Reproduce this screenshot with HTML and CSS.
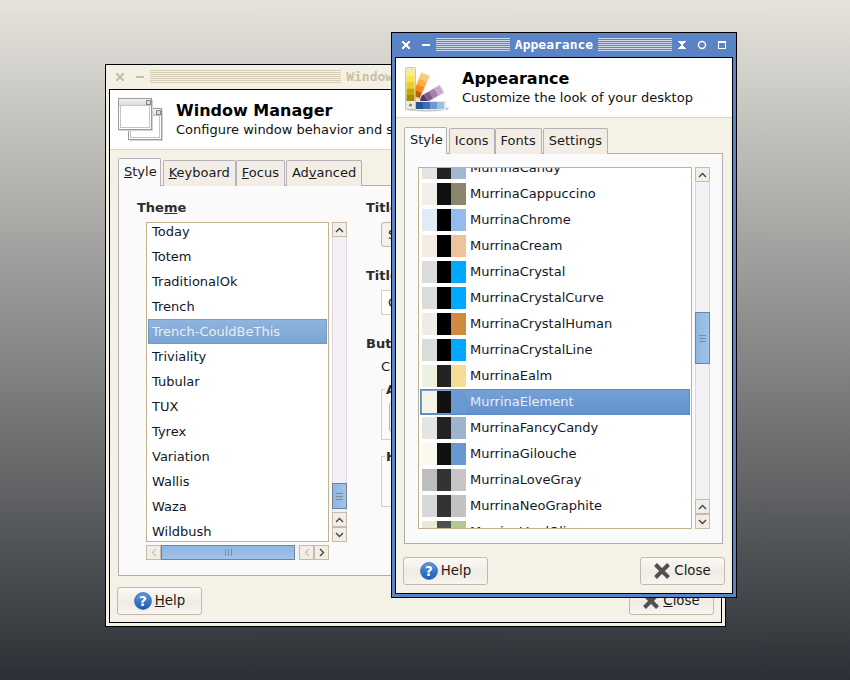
FILE: index.html
```html
<!DOCTYPE html>
<html lang="en">
<head>
  <meta charset="UTF-8">
  <title>Desktop settings</title>
  <link rel="stylesheet" href="styles.css">
</head>
<body>
  <svg class="defs" width="0" height="0">
    <symbol id="up" viewBox="0 0 9 6"><path d="M1 5 L4.5 1.5 L8 5" fill="none" stroke="#444" stroke-width="1.4"/></symbol>
    <symbol id="down" viewBox="0 0 9 6"><path d="M1 1 L4.5 4.5 L8 1" fill="none" stroke="#444" stroke-width="1.4"/></symbol>
    <symbol id="left" viewBox="0 0 6 9"><path d="M5 1 L1.5 4.5 L5 8" fill="none" stroke="currentColor" stroke-width="1.4"/></symbol>
    <symbol id="right" viewBox="0 0 6 9"><path d="M1 1 L4.5 4.5 L1 8" fill="none" stroke="currentColor" stroke-width="1.4"/></symbol>
    <symbol id="help" viewBox="0 0 18 18">
      <defs><linearGradient id="helpfill" x1="0" y1="0" x2="0" y2="1"><stop offset="0" stop-color="#5a9be0"/><stop offset="1" stop-color="#1a5cb0"/></linearGradient></defs>
      <circle cx="9" cy="9" r="8.5" fill="url(#helpfill)" stroke="#1d5aa5" stroke-width="0.6"/>
      <text x="9" y="14" text-anchor="middle" font-family="DejaVu Sans" font-weight="bold" font-size="13.5" fill="#fff">?</text>
    </symbol>
    <symbol id="cross" viewBox="0 0 16 16"><path d="M1.5 1.5 L14.5 14.5 M14.5 1.5 L1.5 14.5" stroke="#505050" stroke-width="4"/></symbol>
    <symbol id="wm-close" viewBox="0 0 10 10" shape-rendering="crispEdges"><path d="M1 1h2v1h1v1h2v-1h1v-1h2v2h-1v1h-1v2h1v1h1v2h-2v-1h-1v-1h-2v1h-1v1h-2v-2h1v-1h1v-2h-1v-1h-1z" fill="currentColor"/></symbol>
    <symbol id="wm-min" viewBox="0 0 10 10" shape-rendering="crispEdges"><rect x="1" y="4" width="8" height="2" fill="currentColor"/></symbol>
    <symbol id="wm-shade" viewBox="0 0 10 10" shape-rendering="crispEdges"><path d="M1 1h8v1h-1v1h-1v1h-1v2h1v1h1v1h1v1h-8v-1h1v-1h1v-1h1v-2h-1v-1h-1v-1h-1z" fill="currentColor"/></symbol>
    <symbol id="wm-stick" viewBox="0 0 10 10"><circle cx="5" cy="5" r="3.5" fill="none" stroke="currentColor" stroke-width="1.4"/></symbol>
    <symbol id="wm-max" viewBox="0 0 10 10" shape-rendering="crispEdges"><path d="M1 1h8v8h-8z M2 3v5h6v-5z" fill="currentColor" fill-rule="evenodd"/></symbol>
  </svg>

  <!-- back window -->
  <div class="window wm">
    <div class="titlebar">
      <div class="tb-btns">
        <svg class="tb-btn"><use href="#wm-close"/></svg>
        <svg class="tb-btn"><use href="#wm-min"/></svg>
      </div>
      <span class="stripes"></span>
      <span class="tb-title">Window Manager</span>
      <span class="stripes"></span>
      <div class="tb-btns">
        <svg class="tb-btn"><use href="#wm-shade"/></svg>
        <svg class="tb-btn"><use href="#wm-stick"/></svg>
        <svg class="tb-btn"><use href="#wm-max"/></svg>
      </div>
    </div>
    <div class="client">
      <div class="header">
        <svg class="header-icon" width="46" height="44" viewBox="0 0 46 44">
          <defs><linearGradient id="wintitle" x1="0" y1="0" x2="0" y2="1"><stop offset="0" stop-color="#f2f2f0"/><stop offset="1" stop-color="#d6d8d2"/></linearGradient></defs>
          <rect x="11" y="12" width="34" height="31" fill="#d4d4d0"/>
          <rect x="10.5" y="10.5" width="33" height="31" fill="#fff" stroke="#9a9a96"/>
          <rect x="11" y="11" width="32" height="7" fill="url(#wintitle)"/>
          <rect x="12.5" y="17.5" width="29" height="22" fill="#fff" stroke="#c4c4c0"/>
          <rect x="38.5" y="12.5" width="4" height="4" fill="#ddd" stroke="#888"/>
          <rect x="1" y="2" width="34" height="31" fill="#d4d4d0"/>
          <rect x="0.5" y="0.5" width="33" height="31" fill="#fff" stroke="#9a9a96"/>
          <rect x="1" y="1" width="32" height="7" fill="url(#wintitle)"/>
          <rect x="2.5" y="7.5" width="29" height="22" fill="#fff" stroke="#c4c4c0"/>
          <rect x="28.5" y="2.5" width="4" height="4" fill="#ddd" stroke="#888"/>
        </svg>
        <div class="header-text">
          <div class="header-title">Window Manager</div>
          <div class="header-sub">Configure window behavior and shortcuts</div>
        </div>
      </div>
      <div class="notebook wm-notebook">
        <div class="tabs">
          <div class="tab active"><u>S</u>tyle</div>
          <div class="tab"><u>K</u>eyboard</div>
          <div class="tab"><u>F</u>ocus</div>
          <div class="tab">Ad<u>v</u>anced</div>
        </div>
        <div class="pane wm-pane">
          <div class="theme-col">
            <div class="section-label">The<u>m</u>e</div>
            <div class="list-row">
              <div class="list theme-list">
                <div class="rows theme-rows">
                  <div class="row">Today</div>
                  <div class="row">Totem</div>
                  <div class="row">TraditionalOk</div>
                  <div class="row">Trench</div>
                  <div class="row selected">Trench-CouldBeThis</div>
                  <div class="row">Triviality</div>
                  <div class="row">Tubular</div>
                  <div class="row">TUX</div>
                  <div class="row">Tyrex</div>
                  <div class="row">Variation</div>
                  <div class="row">Wallis</div>
                  <div class="row">Waza</div>
                  <div class="row">Wildbush</div>
                </div>
              </div>
              <div class="vscroll">
                <div class="step"><svg class="chev-v"><use href="#up"/></svg></div>
                <div class="trough theme-trough"><div class="thumb"><span class="grip"></span></div></div>
                <div class="step"><svg class="chev-v"><use href="#up"/></svg></div>
                <div class="step"><svg class="chev-v"><use href="#down"/></svg></div>
              </div>
            </div>
            <div class="hscroll">
              <div class="step-h dim"><svg class="chev-h"><use href="#left"/></svg></div>
              <div class="hthumb"><span class="hgrip"></span></div>
              <div class="hgap"></div>
              <div class="step-h dim"><svg class="chev-h"><use href="#left"/></svg></div>
              <div class="step-h"><svg class="chev-h"><use href="#right"/></svg></div>
            </div>
          </div>
          <div class="options-col">
            <div class="section-label">Title font</div>
            <div class="fake-button">Sans Bold 10</div>
            <div class="section-label opt-gap">Title Alignment</div>
            <div class="fake-field">Center</div>
            <div class="section-label opt-gap">Button layout</div>
            <div class="opt-hint">Click and drag the buttons to change the layout</div>
            <fieldset class="frame frame-active">
              <legend>Active</legend>
              <div class="fake-button inner">Title</div>
            </fieldset>
            <fieldset class="frame frame-hidden">
              <legend>Hidden</legend>
            </fieldset>
          </div>
        </div>
      </div>
      <div class="footer">
        <div class="button"><svg class="btn-help"><use href="#help"/></svg><span><u>H</u>elp</span></div>
        <div class="button"><svg class="btn-cross"><use href="#cross"/></svg><span><u>C</u>lose</span></div>
      </div>
    </div>
  </div>

  <!-- front window -->
  <div class="window app">
    <div class="titlebar">
      <div class="tb-btns">
        <svg class="tb-btn"><use href="#wm-close"/></svg>
        <svg class="tb-btn"><use href="#wm-min"/></svg>
      </div>
      <span class="stripes"></span>
      <span class="tb-title">Appearance</span>
      <span class="stripes"></span>
      <div class="tb-btns">
        <svg class="tb-btn"><use href="#wm-shade"/></svg>
        <svg class="tb-btn"><use href="#wm-stick"/></svg>
        <svg class="tb-btn"><use href="#wm-max"/></svg>
      </div>
    </div>
    <div class="client">
      <div class="header">
        <svg class="header-icon palette" width="46" height="50" viewBox="0 0 46 50">
          <ellipse cx="23" cy="45.5" rx="22" ry="3" fill="#c4c4c0"/>
          <g transform="rotate(60 8 43)">
            <rect x="3" y="8" width="10" height="36" rx="1" fill="#e6dce6"/>
            <rect x="4" y="9" width="8" height="6" fill="#c8a8cc"/>
            <rect x="4" y="15" width="8" height="6" fill="#a880b0"/>
            <rect x="4" y="21" width="8" height="6" fill="#805c90"/>
            <rect x="4" y="27" width="8" height="6" fill="#54346a"/>
          </g>
          <g transform="rotate(23 8 43)">
            <rect x="3" y="8" width="10" height="36" rx="1" fill="#f0e2c8"/>
            <rect x="4" y="9" width="8" height="6" fill="#fcc878"/>
            <rect x="4" y="15" width="8" height="6" fill="#fcac40"/>
            <rect x="4" y="21" width="8" height="6" fill="#f88c10"/>
            <rect x="4" y="27" width="8" height="6" fill="#c05c08"/>
          </g>
          <rect x="10" y="38" width="32" height="9" fill="#e4e8ee"/>
          <rect x="12" y="39" width="7" height="7" fill="#2a5590"/>
          <rect x="19" y="39" width="7" height="7" fill="#3a6fb0"/>
          <rect x="26" y="39" width="7" height="7" fill="#6a9ad0"/>
          <rect x="33" y="39" width="7" height="7" fill="#9cc0e4"/>
          <rect x="1.5" y="4.5" width="10" height="42" rx="1" fill="#ecebe0" stroke="#a8a8a0" stroke-width="0.6"/>
          <rect x="2.5" y="6" width="8" height="6.5" fill="#fcec84"/>
          <rect x="2.5" y="12.5" width="8" height="6.5" fill="#fce44c"/>
          <rect x="2.5" y="19" width="8" height="6.5" fill="#ecd020"/>
          <rect x="2.5" y="25.5" width="8" height="6.5" fill="#c8a800"/>
          <rect x="2.5" y="32" width="8" height="6" fill="#a88800"/>
          <circle cx="6.5" cy="42" r="1.6" fill="#888"/>
        </svg>
        <div class="header-text">
          <div class="header-title">Appearance</div>
          <div class="header-sub">Customize the look of your desktop</div>
        </div>
      </div>
      <div class="notebook app-notebook">
        <div class="tabs">
          <div class="tab active">Style</div>
          <div class="tab">Icons</div>
          <div class="tab">Fonts</div>
          <div class="tab">Settings</div>
        </div>
        <div class="pane app-pane">
          <div class="list-row app-list-row">
            <div class="list style-list">
              <div class="rows style-rows">
                <div class="row style-row"><span class="swatch s-candy"><i></i><i></i><i></i></span>MurrinaCandy</div>
                <div class="row style-row"><span class="swatch s-cappuccino"><i></i><i></i><i></i></span>MurrinaCappuccino</div>
                <div class="row style-row"><span class="swatch s-chrome"><i></i><i></i><i></i></span>MurrinaChrome</div>
                <div class="row style-row"><span class="swatch s-cream"><i></i><i></i><i></i></span>MurrinaCream</div>
                <div class="row style-row"><span class="swatch s-crystal"><i></i><i></i><i></i></span>MurrinaCrystal</div>
                <div class="row style-row"><span class="swatch s-crystal"><i></i><i></i><i></i></span>MurrinaCrystalCurve</div>
                <div class="row style-row"><span class="swatch s-human"><i></i><i></i><i></i></span>MurrinaCrystalHuman</div>
                <div class="row style-row"><span class="swatch s-crystal"><i></i><i></i><i></i></span>MurrinaCrystalLine</div>
                <div class="row style-row"><span class="swatch s-ealm"><i></i><i></i><i></i></span>MurrinaEalm</div>
                <div class="row style-row selected"><span class="swatch s-element"><i></i><i></i><i></i></span>MurrinaElement</div>
                <div class="row style-row"><span class="swatch s-fancy"><i></i><i></i><i></i></span>MurrinaFancyCandy</div>
                <div class="row style-row"><span class="swatch s-gilouche"><i></i><i></i><i></i></span>MurrinaGilouche</div>
                <div class="row style-row"><span class="swatch s-lovegray"><i></i><i></i><i></i></span>MurrinaLoveGray</div>
                <div class="row style-row"><span class="swatch s-neo"><i></i><i></i><i></i></span>MurrinaNeoGraphite</div>
                <div class="row style-row"><span class="swatch s-verd"><i></i><i></i><i></i></span>MurrinaVerdOlive</div>
              </div>
            </div>
            <div class="vscroll">
              <div class="step"><svg class="chev-v"><use href="#up"/></svg></div>
              <div class="trough style-trough"><div class="thumb"><span class="grip"></span></div></div>
              <div class="step"><svg class="chev-v"><use href="#up"/></svg></div>
              <div class="step"><svg class="chev-v"><use href="#down"/></svg></div>
            </div>
          </div>
        </div>
      </div>
      <div class="footer">
        <div class="button"><svg class="btn-help"><use href="#help"/></svg><span>Help</span></div>
        <div class="button"><svg class="btn-cross"><use href="#cross"/></svg><span>Close</span></div>
      </div>
    </div>
  </div>
</body>
</html>
```

FILE: styles.css
```css
html, body {
  margin: 0;
  padding: 0;
  height: 100%;
}

body {
  position: relative;
  overflow: hidden;
  font-family: "DejaVu Sans", sans-serif;
  font-size: 13px;
  color: #1a1a1a;
  background: linear-gradient(to bottom, #e6e3dc 0%, #2c3036 100%);
}

.defs {
  position: absolute;
}

/* windows sit on the desktop at fixed places */
.window {
  position: absolute;
  box-sizing: border-box;
  display: flex;
  flex-direction: column;
  border: 1px solid #000;
  overflow: hidden;
}

.wm {
  left: 105px;
  top: 64px;
  width: 621px;
  height: 563px;
  background: #f3f0e6;
  color: #c9c0a2;
}

.app {
  left: 391px;
  top: 32px;
  width: 346px;
  height: 566px;
  background: #5b84c6;
  color: #fff;
}

.titlebar {
  display: flex;
  align-items: center;
  gap: 5px;
  height: 24px;
  flex: none;
  padding: 0 9px;
}

.wm .titlebar {
  padding-right: 18px;
}

.tb-btns {
  display: flex;
  gap: 10px;
  flex: none;
}

.tb-btn {
  width: 10px;
  height: 10px;
  flex: none;
}

.tb-title {
  flex: none;
  font-family: "DejaVu Sans Mono", monospace;
  font-weight: bold;
  font-size: 13px;
  margin-top: -1px;
}

.stripes {
  flex: 1;
  height: 14px;
  background: repeating-linear-gradient(to bottom, currentColor 0, currentColor 1px, transparent 1px, transparent 2px);
  opacity: 0.7;
}

.client {
  flex: 1;
  display: flex;
  flex-direction: column;
  min-height: 0;
  margin: 0 3px 3px;
  border: 1px solid #000;
  background: #f4f1e7;
  color: #1a1a1a;
}

.header {
  display: flex;
  align-items: center;
  gap: 12px;
  height: 60px;
  flex: none;
  box-sizing: border-box;
  padding-left: 8px;
  background: #fff;
  border-bottom: 1px solid #dcd6c0;
  white-space: nowrap;
}

.header-title {
  font-size: 16px;
  font-weight: bold;
  color: #000;
  line-height: 20px;
}

.header-sub {
  line-height: 17px;
  color: #111;
}

.notebook {
  display: flex;
  flex-direction: column;
  margin: 10px 9px 0 8px;
}

.tabs {
  display: flex;
  align-items: flex-end;
  height: 26px;
  margin-bottom: -1px;
  position: relative;
  z-index: 1;
}

.tab {
  box-sizing: border-box;
  height: 26px;
  padding: 4px 5px 0 5px;
  line-height: 16px;
  background: #f2eee5;
  border: 1px solid #b8b0b8;
  border-bottom: 0;
  border-radius: 2px 2px 0 0;
  white-space: nowrap;
}

.tab:last-child {
  margin-left: 1px;
}

.tab.active {
  height: 27px;
  padding-right: 3px;
  margin-right: 2px;
  background: #fafafa;
}

.wm .tab.active {
  height: 28px;
  padding-top: 5px;
}

.pane {
  box-sizing: border-box;
  background: #fafafa;
  border: 1px solid #b3abb3;
}

.wm-pane {
  display: flex;
  height: 391px;
  padding: 13px 0 0 18px;
}

.app-pane {
  height: 391px;
  padding: 13px 0 0 13px;
}

.section-label {
  font-weight: bold;
  color: #2c2c2c;
  line-height: 17px;
  white-space: nowrap;
}

.theme-col {
  flex: none;
  width: 229px;
}

.theme-col .section-label {
  margin-bottom: 6px;
}

.list-row {
  display: flex;
  gap: 3px;
}

.theme-col .list-row {
  padding-left: 9px;
}

.list {
  box-sizing: border-box;
  flex: none;
  overflow: hidden;
  background: #fff;
  border: 1px solid #bfb38c;
}

.theme-list {
  width: 183px;
  height: 320px;
}

.style-list {
  width: 274px;
  height: 362px;
}

.rows {
  padding: 0 1px;
}

.theme-rows {
  margin-top: -4px;
}

.style-rows {
  margin-top: -13px;
}

.row {
  box-sizing: border-box;
  display: flex;
  align-items: center;
  height: 25px;
  padding-left: 4px;
  color: #101828;
  white-space: nowrap;
}

.row.selected {
  color: #e8edf6;
  padding-left: 3px;
  background: linear-gradient(to bottom, #8fb4dd, #7ba5d4);
  border: 1px solid #6f9bcf;
}

.style-row {
  align-items: flex-start;
  height: 26px;
  padding-left: 2px;
  line-height: 25px;
}

.style-row.selected {
  background: linear-gradient(to bottom, #74a0d5, #6592ce);
  border-color: #5c8ac8;
  padding-left: 1px;
  line-height: 23px;
}

.swatch {
  display: flex;
  align-self: center;
  height: 22px;
  margin-right: 4px;
}

.swatch i {
  display: block;
  width: 15px;
}

.swatch i:nth-child(1) { width: 15px; }
.swatch i:nth-child(2) { width: 14px; }

.s-candy i:nth-child(1), .s-fancy i:nth-child(1) { background: #e4e4e4; }
.s-candy i:nth-child(2), .s-fancy i:nth-child(2) { background: #222; }
.s-candy i:nth-child(3) { background: #a3b7d0; }
.s-fancy i:nth-child(3) { background: #9fb3cc; }
.s-cappuccino i:nth-child(1) { background: #f0f0e8; }
.s-cappuccino i:nth-child(2) { background: #111; }
.s-cappuccino i:nth-child(3) { background: #8b8570; }
.s-chrome i:nth-child(1) { background: #e0ebf8; }
.s-chrome i:nth-child(2) { background: #000; }
.s-chrome i:nth-child(3) { background: #93bbee; }
.s-cream i:nth-child(1) { background: #f3ece4; }
.s-cream i:nth-child(2) { background: #000; }
.s-cream i:nth-child(3) { background: #eec29c; }
.s-crystal i:nth-child(1) { background: #dcdcdc; }
.s-crystal i:nth-child(2) { background: #000; }
.s-crystal i:nth-child(3) { background: #00a8ff; }
.s-human i:nth-child(1) { background: #efece6; }
.s-human i:nth-child(2) { background: #000; }
.s-human i:nth-child(3) { background: #d08a40; }
.s-ealm i:nth-child(1) { background: #eef0e0; }
.s-ealm i:nth-child(2) { background: #222; }
.s-ealm i:nth-child(3) { background: #f3dc98; }
.s-element i:nth-child(1) { background: #f5f2e8; }
.s-element i:nth-child(2) { background: #111; }
.s-element i:nth-child(3) { background: #6a9ad0; }
.s-gilouche i:nth-child(1) { background: #fbf8f0; }
.s-gilouche i:nth-child(2) { background: #111; }
.s-gilouche i:nth-child(3) { background: #6898d0; }
.s-lovegray i:nth-child(1) { background: #bdbdbd; }
.s-lovegray i:nth-child(2) { background: #333; }
.s-lovegray i:nth-child(3) { background: #c6c6c6; }
.s-neo i:nth-child(1) { background: #d8d8d8; }
.s-neo i:nth-child(2) { background: #333; }
.s-neo i:nth-child(3) { background: #c2c2c2; }
.s-verd i:nth-child(1) { background: #ebe8d8; }
.s-verd i:nth-child(2) { background: #4e4e4e; }
.s-verd i:nth-child(3) { background: #b6c890; }

/* scrollbars */
.vscroll {
  display: flex;
  flex-direction: column;
  width: 15px;
  flex: none;
}

.step, .step-h {
  box-sizing: border-box;
  display: flex;
  align-items: center;
  justify-content: center;
  flex: none;
  background: #f2eee5;
  border: 1px solid #c9b9ab;
}

.step {
  height: 15px;
}

.step-h {
  width: 15px;
  height: 15px;
  color: #444;
}

.step-h.dim {
  color: #c8c4ba;
}

.chev-v {
  width: 9px;
  height: 6px;
}

.chev-h {
  width: 6px;
  height: 9px;
}

.trough {
  flex: 1;
  box-sizing: border-box;
  background: #f2f0f5;
  border-left: 1px solid #dcd8dc;
  border-right: 1px solid #dcd8dc;
}

.thumb {
  box-sizing: border-box;
  display: flex;
  align-items: center;
  justify-content: center;
  margin-left: -1px;
  margin-right: -1px;
  background: linear-gradient(to right, #8db7e3, #a0c3e8);
  border: 1px solid #72829a;
}

.theme-trough .thumb {
  height: 26px;
  margin-top: 246px;
}

.style-trough .thumb {
  height: 52px;
  margin-top: 130px;
}

.grip {
  width: 7px;
  height: 5px;
  border-top: 1px solid #7c8a9c;
  border-bottom: 1px solid #7c8a9c;
  background: linear-gradient(#7c8a9c, #7c8a9c) center / 100% 1px no-repeat;
}

.hscroll {
  display: flex;
  width: 183px;
  height: 15px;
  margin: 3px 0 0 9px;
}

.hthumb {
  box-sizing: border-box;
  display: flex;
  align-items: center;
  justify-content: center;
  width: 135px;
  background: linear-gradient(to bottom, #8db7e3, #a0c3e8);
  border: 1px solid #72829a;
}

.hgrip {
  width: 5px;
  height: 7px;
  border-left: 1px solid #7c8a9c;
  border-right: 1px solid #7c8a9c;
  background: linear-gradient(#7c8a9c, #7c8a9c) center / 1px 100% no-repeat;
}

.hgap {
  width: 4px;
  background: #f2f0f5;
}

/* right side of the window manager dialog, mostly behind the other window */
.options-col {
  flex: 1;
  min-width: 0;
}

.opt-gap {
  margin-top: 20px;
}

.fake-button {
  box-sizing: border-box;
  height: 25px;
  margin: 6px 0 0 15px;
  line-height: 23px;
  padding-left: 6px;
  border: 1px solid #c0b6a8;
  border-radius: 3px;
  background: #f4f1ea;
}

.fake-field {
  box-sizing: border-box;
  height: 25px;
  margin: 6px 0 0 15px;
  padding-left: 6px;
  line-height: 23px;
  background: #fff;
  border: 1px solid #d6cfb4;
}

.opt-hint {
  margin: 6px 0 0 15px;
  line-height: 17px;
  white-space: nowrap;
}

.frame {
  box-sizing: border-box;
  margin: 0 0 0 15px;
  padding: 0 7px;
  height: 58px;
  border: 1px solid #d6cfb4;
}

.frame legend {
  font-weight: bold;
  padding: 0 1px;
  margin-left: -4px;
  color: #2c2c2c;
}

.frame-active {
  margin-top: 7px;
}

.frame-hidden {
  margin-top: 9px;
}

.frame .inner {
  margin: 5px 0 0;
  height: 30px;
}

/* bottom buttons */
.footer {
  display: flex;
  justify-content: space-between;
  margin-top: 13px;
  padding: 0 7px;
}

.wm .footer {
  margin-top: 11px;
}

.button {
  box-sizing: border-box;
  display: flex;
  align-items: center;
  justify-content: center;
  gap: 3px;
  width: 85px;
  height: 28px;
  font-size: 13.33px;
  border: 1px solid #c4b8ac;
  border-radius: 3px;
  background: linear-gradient(to bottom, #faf9f6, #f0ece4 55%, #f7f5f0);
}

.button span {
  margin-bottom: 2px;
}

.btn-help {
  width: 18px;
  height: 18px;
}

.btn-cross {
  width: 16px;
  height: 16px;
  margin-right: 1px;
}
```
